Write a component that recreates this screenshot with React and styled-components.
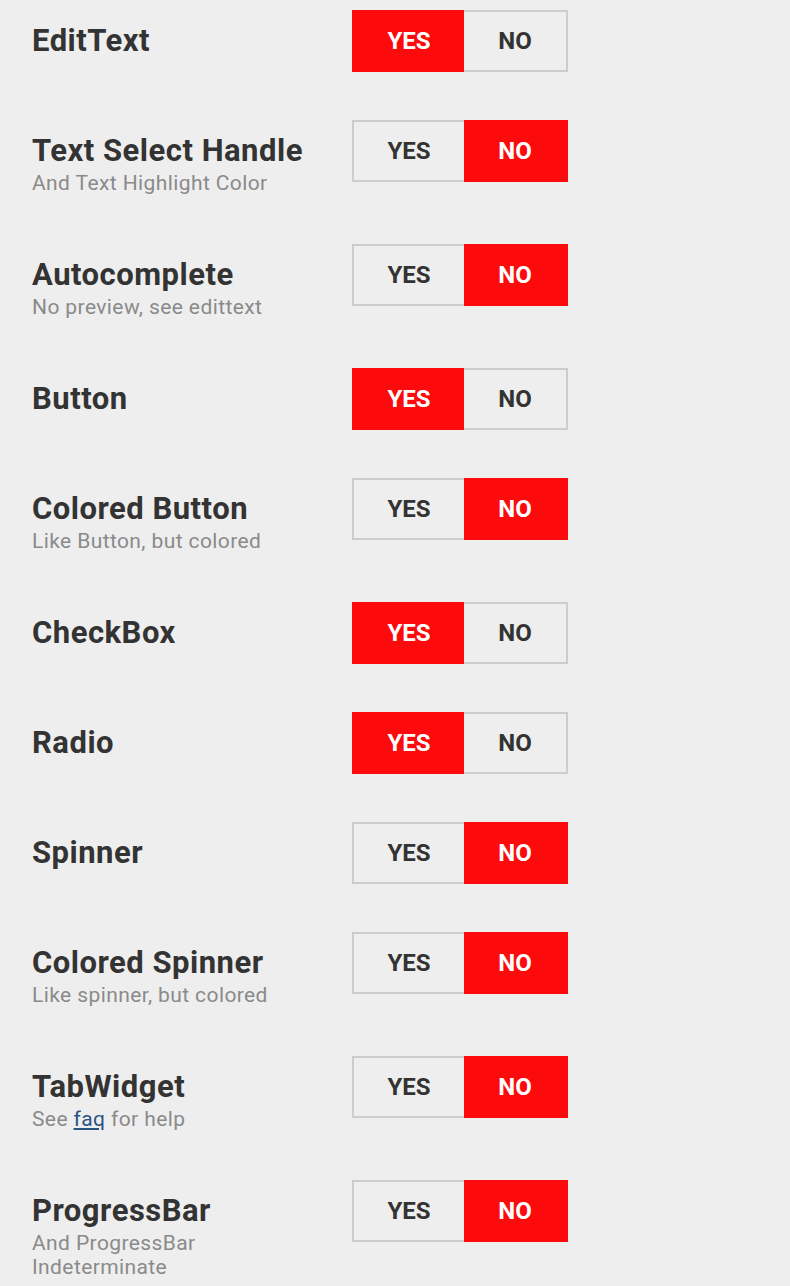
import React from 'react';
import styled, { createGlobalStyle } from 'styled-components';

const GlobalStyle = createGlobalStyle`
    body {
        margin: 0;
        background: #eeeeee;
        font-family: Roboto, 'Liberation Sans', sans-serif;
    }
`;

const options = [
    { title: 'EditText', value: true },
    { title: 'Text Select Handle', sub: 'And Text Highlight Color', value: false },
    { title: 'Autocomplete', sub: 'No preview, see edittext', value: false },
    { title: 'Button', value: true },
    { title: 'Colored Button', sub: 'Like Button, but colored', value: false },
    { title: 'CheckBox', value: true },
    { title: 'Radio', value: true },
    { title: 'Spinner', value: false },
    { title: 'Colored Spinner', sub: 'Like spinner, but colored', value: false },
    {
        title: 'TabWidget',
        sub: (
            <>
                See <a href="#faq">faq</a> for help
            </>
        ),
        value: false,
    },
    { title: 'ProgressBar', sub: 'And ProgressBar Indeterminate', value: false },
];

const App = () => {
    return (
        <>
            <GlobalStyle />
            <List>
                {options.map((o) => (
                    <Row key={o.title}>
                        <Label>
                            <Title>{o.title}</Title>
                            {o.sub && <Sub>{o.sub}</Sub>}
                        </Label>
                        <Toggle>
                            <Choice $wide $active={o.value}>YES</Choice>
                            <Choice $active={!o.value}>NO</Choice>
                        </Toggle>
                    </Row>
                ))}
            </List>
        </>
    );
};

export default App;

const List = styled.div`
    display: flex;
    flex-direction: column;
    gap: 48px;
    padding: 10px 0 0 32px;
`;

const Row = styled.div`
    display: flex;
    align-items: flex-start;
`;

const Label = styled.div`
    width: 320px;
    padding: 11px 0 1px;
    box-sizing: border-box;
`;

const Title = styled.div`
    font-size: 31px;
    line-height: 40px;
    font-weight: 700;
    letter-spacing: 0.5px;
    color: #333333;
`;

const Sub = styled.div`
    max-width: 250px;
    font-size: 21px;
    line-height: 24px;
    letter-spacing: 0.4px;
    color: #8a8a8a;

    a {
        color: #2c5483;
        text-decoration: underline;
    }
`;

const Toggle = styled.div`
    display: flex;
    height: 62px;
`;

const Choice = styled.div`
    width: ${(p) => (p.$wide ? '112px' : '104px')};
    height: 62px;
    box-sizing: border-box;
    display: flex;
    align-items: center;
    justify-content: center;
    font-size: 24px;
    font-weight: 700;
    color: ${(p) => (p.$active ? '#ffffff' : '#333333')};
    background: ${(p) => (p.$active ? '#fc0a0c' : 'transparent')};
    border: 2px solid ${(p) => (p.$active ? '#fc0a0c' : '#cccccc')};
    ${(p) => (p.$wide ? 'border-right: none;' : 'border-left: none;')}
`;
